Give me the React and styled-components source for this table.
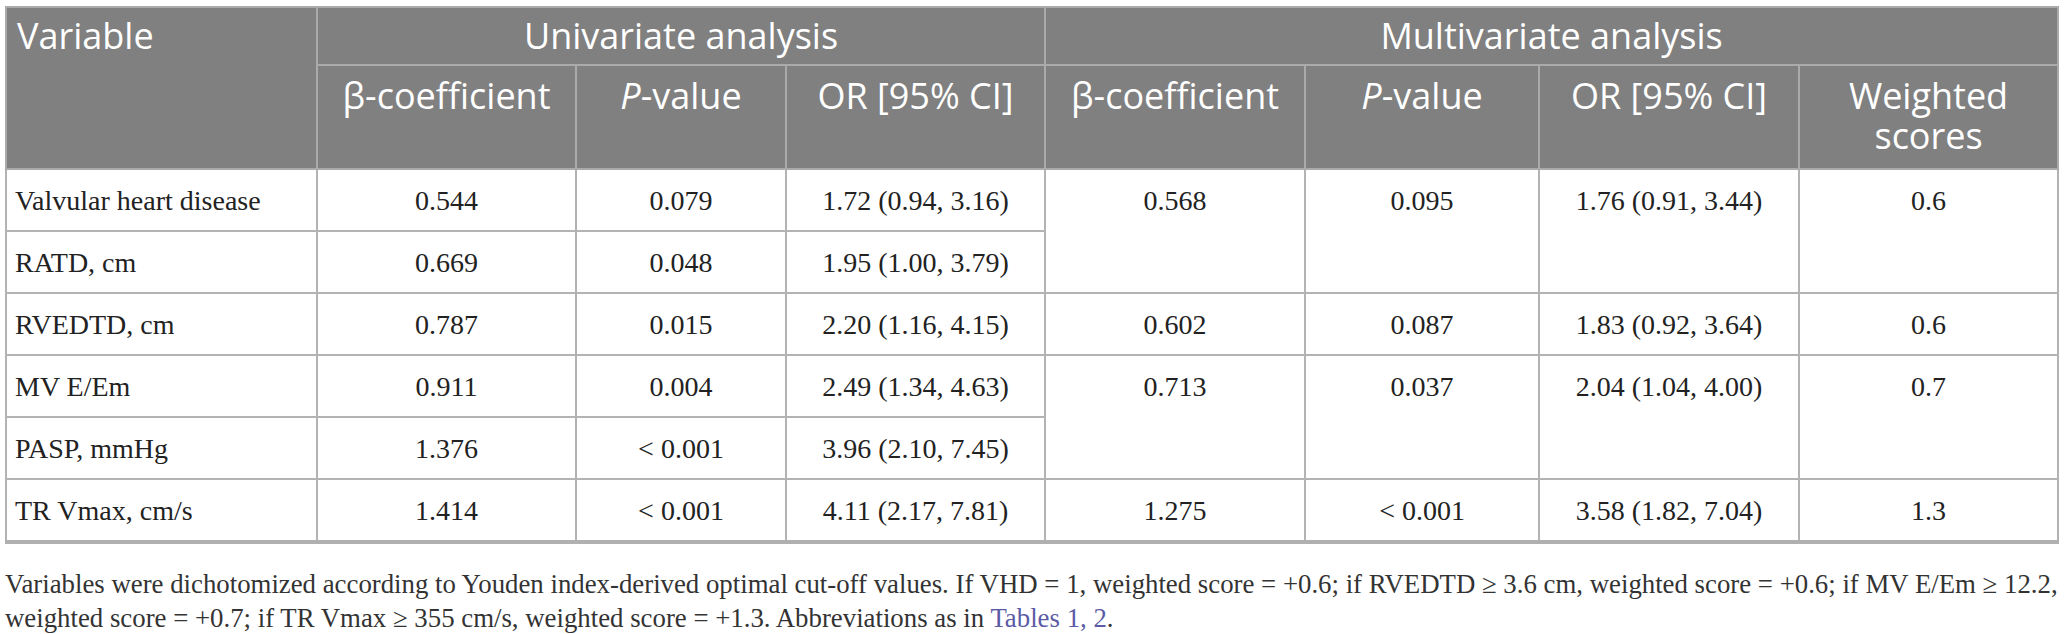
import * as React from "react";
import styled, { createGlobalStyle } from "styled-components";

const GlobalStyle = createGlobalStyle`
html, body {
    margin: 0;
    padding: 0;
    background: #ffffff;
}
`

const Page = styled.div`
padding: 6px 9px 0 5px;
width: 2052px;
`

const Table = styled.table`
width: 2052px;
table-layout: fixed;
border-collapse: collapse;
border: 2px solid #c2c2c2;
border-bottom: 4px solid #b0b0b0;
`

const HeadCell = styled.th`
background-color: #808080;
color: #ffffff;
font-family: "Open Sans", "Noto Sans", sans-serif;
font-weight: 400;
font-size: 36px;
line-height: 40px;
border: 2px solid #aaaaaa;
vertical-align: top;
text-align: ${props => props.$left ? "left" : "center"};
padding: ${props => props.$top ? "8px 10px 8px" : "10px 10px 12px"};
`

const Cell = styled.td`
font-family: "Liberation Serif", "Times New Roman", serif;
font-size: 28px;
line-height: 34px;
color: #222222;
border: 2px solid #b3b3b3;
vertical-align: top;
text-align: ${props => props.$left ? "left" : "center"};
padding: 14px 10px 12px;
padding-left: ${props => props.$left ? "8px" : "10px"};
`

const Note = styled.p`
margin: 23px 0 0 0;
font-family: "Liberation Serif", "Times New Roman", serif;
font-size: 26.8px;
line-height: 34px;
color: #333333;
white-space: nowrap;
`

const Ref = styled.a`
color: #5b5ba5;
text-decoration: none;
`

const rows = [
    { name: "Valvular heart disease", b: "0.544", p: "0.079", or: "1.72 (0.94, 3.16)",
      multi: { span: 2, b: "0.568", p: "0.095", or: "1.76 (0.91, 3.44)", w: "0.6" } },
    { name: "RATD, cm", b: "0.669", p: "0.048", or: "1.95 (1.00, 3.79)" },
    { name: "RVEDTD, cm", b: "0.787", p: "0.015", or: "2.20 (1.16, 4.15)",
      multi: { span: 1, b: "0.602", p: "0.087", or: "1.83 (0.92, 3.64)", w: "0.6" } },
    { name: "MV E/Em", b: "0.911", p: "0.004", or: "2.49 (1.34, 4.63)",
      multi: { span: 2, b: "0.713", p: "0.037", or: "2.04 (1.04, 4.00)", w: "0.7" } },
    { name: "PASP, mmHg", b: "1.376", p: "< 0.001", or: "3.96 (2.10, 7.45)" },
    { name: "TR Vmax, cm/s", b: "1.414", p: "< 0.001", or: "4.11 (2.17, 7.81)",
      multi: { span: 1, b: "1.275", p: "< 0.001", or: "3.58 (1.82, 7.04)", w: "1.3" } },
];

const widths = [311, 259, 210, 259, 260, 234, 260, 259];

const PValue = () => (
    <><i>P</i>-value</>
);

export default function App() {
    return (
        <Page>
            <GlobalStyle />
            <Table>
                <colgroup>
                    {widths.map((w, i) => <col key={i} style={{ width: w }} />)}
                </colgroup>
                <thead>
                    <tr>
                        <HeadCell $left $top rowSpan={2}>Variable</HeadCell>
                        <HeadCell $top colSpan={3}>Univariate analysis</HeadCell>
                        <HeadCell $top colSpan={4}>Multivariate analysis</HeadCell>
                    </tr>
                    <tr>
                        <HeadCell>β-coefficient</HeadCell>
                        <HeadCell><PValue /></HeadCell>
                        <HeadCell>OR [95% CI]</HeadCell>
                        <HeadCell>β-coefficient</HeadCell>
                        <HeadCell><PValue /></HeadCell>
                        <HeadCell>OR [95% CI]</HeadCell>
                        <HeadCell>Weighted<br />scores</HeadCell>
                    </tr>
                </thead>
                <tbody>
                    {rows.map(r => (
                        <tr key={r.name}>
                            <Cell $left>{r.name}</Cell>
                            <Cell>{r.b}</Cell>
                            <Cell>{r.p}</Cell>
                            <Cell>{r.or}</Cell>
                            {r.multi && (
                                <>
                                    <Cell rowSpan={r.multi.span}>{r.multi.b}</Cell>
                                    <Cell rowSpan={r.multi.span}>{r.multi.p}</Cell>
                                    <Cell rowSpan={r.multi.span}>{r.multi.or}</Cell>
                                    <Cell rowSpan={r.multi.span}>{r.multi.w}</Cell>
                                </>
                            )}
                        </tr>
                    ))}
                </tbody>
            </Table>
            <Note>
                Variables were dichotomized according to Youden index-derived optimal cut-off values. If VHD = 1, weighted score = +0.6; if RVEDTD ≥ 3.6 cm, weighted score = +0.6; if MV E/Em ≥ 12.2,
                <br />
                weighted score = +0.7; if TR Vmax ≥ 355 cm/s, weighted score = +1.3. Abbreviations as in <Ref href="#">Tables 1</Ref><Ref as="span">, </Ref><Ref href="#">2</Ref>.
            </Note>
        </Page>
    );
}
